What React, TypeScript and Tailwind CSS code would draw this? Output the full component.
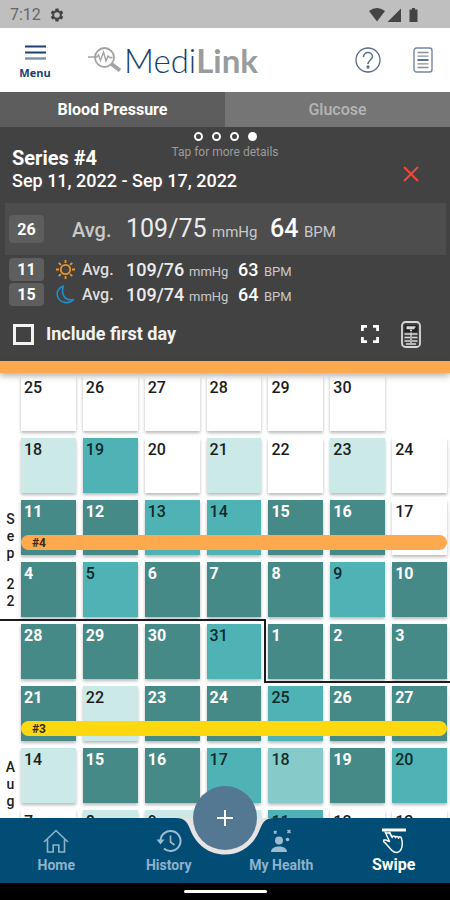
import type { ReactNode } from "react";

type Level = "none" | "pale" | "light" | "mid" | "dark" | "empty";
type Day = [string, Level];
type Week = { days: Day[]; bar?: { label: string; color: string }; monthBreak?: boolean };

const LEVELS: Record<Level, string> = {
  none: "bg-white font-medium text-[#1c1c1c] shadow-[0_2px_3px_rgba(0,0,0,0.28)]",
  pale: "bg-[#cbe9e7] font-medium text-[#1c1c1c] shadow-[0_2px_3px_rgba(0,0,0,0.28)]",
  light: "bg-[#86cac9] font-medium text-[#123033] shadow-[0_2px_3px_rgba(0,0,0,0.28)]",
  mid: "bg-[#4fb3b5] font-medium text-[#0d2a2c] shadow-[0_2px_3px_rgba(0,0,0,0.28)]",
  dark: "bg-[#468a87] font-bold text-white shadow-[0_2px_3px_rgba(0,0,0,0.28)]",
  empty: "",
};

const WEEKS: Week[] = [
  { days: [["25", "none"], ["26", "none"], ["27", "none"], ["28", "none"], ["29", "none"], ["30", "none"], ["", "empty"]] },
  { days: [["18", "pale"], ["19", "mid"], ["20", "none"], ["21", "pale"], ["22", "none"], ["23", "pale"], ["24", "none"]] },
  {
    days: [["11", "dark"], ["12", "dark"], ["13", "mid"], ["14", "mid"], ["15", "dark"], ["16", "dark"], ["17", "none"]],
    bar: { label: "#4", color: "bg-[#ffa94f]" },
  },
  { days: [["4", "dark"], ["5", "mid"], ["6", "dark"], ["7", "dark"], ["8", "dark"], ["9", "mid"], ["10", "dark"]] },
  {
    days: [["28", "dark"], ["29", "dark"], ["30", "dark"], ["31", "mid"], ["1", "dark"], ["2", "dark"], ["3", "dark"]],
    monthBreak: true,
  },
  {
    days: [["21", "dark"], ["22", "pale"], ["23", "dark"], ["24", "dark"], ["25", "mid"], ["26", "dark"], ["27", "dark"]],
    bar: { label: "#3", color: "bg-[#fdd80f]" },
  },
  { days: [["14", "pale"], ["15", "dark"], ["16", "dark"], ["17", "mid"], ["18", "light"], ["19", "dark"], ["20", "mid"]] },
  { days: [["7", "none"], ["8", "pale"], ["9", "pale"], ["10", "pale"], ["11", "mid"], ["12", "none"], ["13", "none"]] },
];

function StatusBar() {
  return (
    <div className="flex h-7 shrink-0 items-center justify-between bg-[#bfbfbf] pt-px pr-[31px] pl-[10px] text-[#4a4a4a]">
      <div className="flex items-center gap-2">
        <span className="text-base text-[#666]">7:12</span>
        <svg viewBox="0 0 24 24" className="size-4" fill="#444">
          <path d="M19.14 12.94c.04-.3.06-.61.06-.94 0-.32-.02-.64-.07-.94l2.03-1.58a.49.49 0 0 0 .12-.61l-1.92-3.32a.49.49 0 0 0-.59-.22l-2.39.96a7 7 0 0 0-1.62-.94l-.36-2.54a.48.48 0 0 0-.48-.41h-3.84a.48.48 0 0 0-.47.41l-.36 2.54c-.59.24-1.13.57-1.62.94l-2.39-.96a.49.49 0 0 0-.59.22L2.74 8.87a.48.48 0 0 0 .12.61l2.03 1.58c-.05.3-.09.63-.09.94s.02.64.07.94l-2.03 1.58a.49.49 0 0 0-.12.61l1.92 3.32c.12.22.37.29.59.22l2.39-.96c.5.38 1.03.7 1.62.94l.36 2.54c.05.24.24.41.48.41h3.84c.24 0 .44-.17.47-.41l.36-2.54a6.8 6.8 0 0 0 1.62-.94l2.39.96c.22.08.47 0 .59-.22l1.92-3.32a.48.48 0 0 0-.12-.61zM12 16.2a4.2 4.2 0 1 1 0-8.4 4.2 4.2 0 0 1 0 8.4z" />
        </svg>
      </div>
      <svg width="50" height="16" viewBox="0 0 50 16" fill="#444">
        <path d="M0 4Q8-2 16 4L8 14.500Z" />
        <path d="M18.500 15H32V1.500Z" />
        <path d="M43 1h3v1.500h2.500V15h-8V2.500H43z" />
      </svg>
    </div>
  );
}

function Header() {
  return (
    <header className="flex h-16 shrink-0 items-center bg-white pr-[17px] pl-[14px]">
      <button className="flex w-[42px] flex-col items-center gap-[6px] pt-1 text-[#173f70]">
        <svg width="21" height="15" viewBox="0 0 21 15">
          <path d="M0 1.500h21M0 7.500h21" stroke="#1c3f74" strokeWidth="2.200" />
          <path d="M0 13.500h21" stroke="#7d92a6" strokeWidth="2.400" />
        </svg>
        <span className="text-[11px] leading-[14px] font-bold font-['Open_Sans',sans-serif]">Menu</span>
      </button>
      <div className="ml-8 flex items-center gap-[2px]">
        <svg width="34" height="28" viewBox="0 0 34 28" fill="none" stroke="#a3a3a3">
          <circle cx="16.500" cy="11.500" r="9.500" strokeWidth="1.800" />
          <path d="M0 11h9l1.500-2 2 5.500L15.500 6l2.500 9 2-5 1.500 1.500h3" strokeWidth="1.400" />
          <path d="M23.500 18l8.500 6.500" strokeWidth="4" />
        </svg>
        <span className="text-[33px] leading-[40px] font-light text-[#173f70] font-['Lato',sans-serif]">
          Medi<span className="font-bold text-[#999c9e]">Link</span>
        </span>
      </div>
      <div className="ml-auto flex items-center gap-8">
        <button aria-label="Help">
          <svg width="26" height="26" viewBox="0 0 26 26" fill="none" stroke="#5b7088" strokeWidth="1.300">
            <circle cx="13" cy="13" r="12" />
            <path d="M8.500 10c0-2.800 2-4.400 4.500-4.400s4.500 1.600 4.500 4c0 3.400-4.500 3.400-4.500 7.400" strokeWidth="1.500" />
            <circle cx="13" cy="20" r="1" fill="#2c4666" />
          </svg>
        </button>
        <button aria-label="Log book">
          <svg width="20" height="26" viewBox="0 0 20 26" fill="none">
            <rect x="1" y="1" width="18" height="24" rx="2.500" stroke="#7487a0" strokeWidth="1.400" />
            <path d="M4.500 5.500h11M4.500 9.200h11M4.500 16.800h11M4.500 20.500h11" stroke="#8a9099" strokeWidth="1.300" />
            <path d="M4.500 13h11" stroke="#24457a" strokeWidth="1.500" />
          </svg>
        </button>
      </div>
    </header>
  );
}

function Tabs() {
  return (
    <div role="tablist" className="grid h-[35px] shrink-0 grid-cols-2 text-base">
      <button role="tab" aria-selected="true" className="bg-[#5d5d5d] font-bold text-white">
        Blood Pressure
      </button>
      <button role="tab" aria-selected="false" className="bg-[#757575] font-medium text-[#b5b5b5]">
        Glucose
      </button>
    </div>
  );
}

function Count({ children, tall }: { children: ReactNode; tall?: boolean }) {
  return (
    <span
      className={`flex w-[35px] items-center justify-center rounded-[4px] bg-[#5e5e5e] pt-px text-base font-bold text-white ${
        tall ? "h-7" : "h-[23px]"
      }`}
    >
      {children}
    </span>
  );
}

function Reading({ count, icon, bp, bpm }: { count: string; icon: ReactNode; bp: string; bpm: string }) {
  return (
    <div className="flex h-[25px] items-center pl-[9px]">
      <Count>{count}</Count>
      <span className="ml-3 w-[19px]">{icon}</span>
      <span className="ml-[7px] w-[44px] text-base font-medium text-[#dedede]">Avg.</span>
      <div className="flex items-baseline text-[#c9c9c9]">
        <span className="w-[63px] text-lg font-medium text-[#ececec]">{bp}</span>
        <span className="w-[49px] text-[13px]">mmHg</span>
        <span className="w-[26px] text-lg font-medium text-white">{bpm}</span>
        <span className="text-[13px]">BPM</span>
      </div>
    </div>
  );
}

function Summary() {
  return (
    <section className="shrink-0 bg-[#424242] text-white">
      <div className="relative h-[76px] px-3 pt-5">
        <button className="absolute inset-x-0 top-[5px] flex flex-col items-center text-[#9b9b9b]">
          <span className="flex gap-[9px]">
            <span className="size-[9px] rounded-full border-2 border-white" />
            <span className="size-[9px] rounded-full border-2 border-white" />
            <span className="size-[9px] rounded-full border-2 border-white" />
            <span className="size-[9px] rounded-full bg-white" />
          </span>
          <span className="mt-1 text-xs leading-[14px]">Tap for more details</span>
        </button>
        <div className="flex items-center justify-between pr-[19px]">
          <h1>
            <span className="block text-xl leading-[23px] font-bold">Series #4</span>
            <span className="block text-lg leading-[22px] font-medium">Sep 11, 2022 - Sep 17, 2022</span>
          </h1>
          <button aria-label="Close" className="relative mt-2">
            <svg width="16" height="16" viewBox="0 0 16 16" stroke="#f4473a" strokeWidth="2">
              <path d="M1 1l14 14M15 1L1 15" />
            </svg>
          </button>
        </div>
      </div>
      <div className="mr-1 ml-[5px] flex h-[52px] items-center bg-[#4d4d4d] pl-1">
        <Count tall>26</Count>
        <div className="ml-7 flex items-baseline text-[#c9c9c9]">
          <span className="w-[54px] text-xl font-medium">Avg.</span>
          <span className="w-[86px] text-[25px] text-[#ececec]">109/75</span>
          <span className="w-[58px] text-[15px]">mmHg</span>
          <span className="w-[34px] text-[25px] font-medium text-white">64</span>
          <span className="text-[15px]">BPM</span>
        </div>
      </div>
      <div className="pt-[2px]">
        <Reading
          count="11"
          bp="109/76"
          bpm="63"
          icon={
            <svg width="19" height="19" viewBox="0 0 19 19" fill="none" stroke="#ec962f" strokeWidth="1.800">
              <circle cx="9.500" cy="9.500" r="4.700" />
              <path d="M9.500 0v3M9.500 16v3M0 9.500h3M16 9.500h3M2.800 2.800l2.100 2.100M14.100 14.100l2.100 2.100M2.800 16.200l2.100-2.100M14.100 4.900l2.100-2.100" />
            </svg>
          }
        />
        <Reading
          count="15"
          bp="109/74"
          bpm="64"
          icon={
            <svg width="19" height="19" viewBox="0 0 19 19" fill="none" stroke="#1f8fcb" strokeWidth="1.600" strokeLinejoin="round">
              <path d="M7.500 1C2.500 2.500 0 7.500 1.800 12c2 5.500 11 8 15.700 2.500-4 .8-8-.4-9.700-3.700C6 7.500 6.200 4 7.500 1z" />
            </svg>
          }
        />
      </div>
      <div className="flex h-[54px] items-center pr-[29px] pl-[13px]">
        <input
          id="first-day"
          type="checkbox"
          className="size-[21px] appearance-none border-[3px] border-[#f2f2f2] checked:bg-white"
        />
        <label htmlFor="first-day" className="ml-3 text-lg font-bold text-[#f2f2f2]">
          Include first day
        </label>
        <button aria-label="Full screen" className="ml-auto">
          <svg width="18" height="18" viewBox="0 0 18 18" fill="none" stroke="#fff" strokeWidth="2.800">
            <path d="M1.400 6V1.400H6M12 1.400h4.600V6M16.600 12v4.600H12M6 16.600H1.400V12" />
          </svg>
        </button>
        <button aria-label="Report" className="ml-[22px]">
          <svg width="20" height="27" viewBox="0 0 20 27" fill="none" stroke="#d8d8d8">
            <rect x="1" y="1" width="18" height="25" rx="3.500" strokeWidth="1.800" />
            <path d="M3.500 4h13v7h-13z" fill="#222" stroke="none" />
            <path d="M5.500 6h9M5.500 7.500h8M9 9.500h2" strokeWidth="1.500" />
            <path d="M3.500 13h13M3.500 16.500h5.500M11 16.500h5.500M3.500 20h5.500M11 20h5.500M5 23h10M10 11.500V22" strokeWidth="1.400" />
          </svg>
        </button>
      </div>
    </section>
  );
}

function MonthLabel({ text }: { text: string }) {
  return (
    <div className="flex w-[21px] flex-col items-center text-sm leading-[17px] font-medium text-[#1c1c1c]">
      {text.split("").map((c, i) => (
        <span key={i} className={c === " " ? "h-[14px]" : "h-[17px]"}>
          {c}
        </span>
      ))}
    </div>
  );
}

function Calendar() {
  return (
    <main className="flex min-h-0 flex-1 overflow-hidden bg-white">
      <div className="flex w-[21px] shrink-0 flex-col gap-[149px] pt-[138px]">
        <MonthLabel text="Sep 22" />
        <MonthLabel text="Aug" />
      </div>
      <div className="flex flex-1 flex-col gap-[7px] pt-[3px] pr-[3px]">
        {WEEKS.map((week, w) => (
          <div key={w} className="relative grid h-[55px] shrink-0 grid-cols-7 gap-x-[7px]">
            {week.days.map(([n, level], d) => (
              <div key={d} className={`px-[3px] pt-[2px] text-base leading-5 ${LEVELS[level]}`}>
                {n}
              </div>
            ))}
            {week.bar && (
              <div
                className={`absolute inset-x-0 top-[35px] flex h-[15px] items-center rounded-full pl-[11px] text-xs font-bold text-[#3a2a10] ${week.bar.color}`}
              >
                {week.bar.label}
              </div>
            )}
            {week.monthBreak && (
              <div className="absolute inset-x-0 -top-[5px] -bottom-1 grid grid-cols-7 gap-x-[7px]">
                <div className="col-span-4 -mr-[5px] -ml-[21px] border-t-2 border-r-2 border-[#1d1a20]" />
                <div className="col-span-3 -mr-[3px] -ml-[4px] border-b-2 border-[#1d1a20]" />
              </div>
            )}
          </div>
        ))}
      </div>
    </main>
  );
}

function NavItem({ label, active, children }: { label: string; active?: boolean; children: ReactNode }) {
  return (
    <a
      href="#"
      className={`flex flex-1 flex-col items-center pt-[10px] ${
        active ? "text-base font-bold text-white" : "text-sm font-bold text-[#8fb1c9]"
      }`}
    >
      <span className="flex h-[26px] items-center">{children}</span>
      <span className="leading-[22px]">{label}</span>
    </a>
  );
}

function BottomNav() {
  return (
    <nav className="relative flex h-[65px] shrink-0 bg-[#024d76]">
      <NavItem label="Home">
        <svg width="26" height="24" viewBox="0 0 26 24" fill="none" stroke="#8fb1c9" strokeWidth="1.600">
          <path d="M1 13L13 1.500 25 13M4.500 10.500V23h5.700v-7h5.600v7h5.700V10.500" />
        </svg>
      </NavItem>
      <NavItem label="History">
        <svg width="26" height="24" viewBox="0 0 26 24" fill="none" stroke="#9dbcd0" strokeWidth="2">
          <path d="M4.500 12a10 10 0 1 1 3.400 7.500" />
          <path d="M.5 10.500h8l-4 5z" fill="#9dbcd0" stroke="none" />
          <path d="M14.500 6.500V13l4 3" strokeWidth="1.600" />
        </svg>
      </NavItem>
      <NavItem label="My Health">
        <svg width="26" height="24" viewBox="0 0 26 24" fill="#9dbcd0">
          <circle cx="11" cy="11.500" r="4" />
          <path d="M3 23c0-4 4-5.500 8-5.500s8 1.500 8 5.500z" />
          <path d="M6 2l2.500 2.500M8.500 2L6 4.500M19.500 1l3 3M22.500 1l-3 3" stroke="#9dbcd0" strokeWidth="1.500" />
          <circle cx="19.500" cy="10.500" r="1.800" />
        </svg>
      </NavItem>
      <NavItem label="Swipe" active>
        <svg width="26" height="26" viewBox="0 0 26 26" fill="none" stroke="#fff" strokeWidth="1.500" strokeLinejoin="round">
          <path d="M1 2h24" strokeWidth="3" />
          <path d="M4 3.500l4.500 10-4-1.500c-2.500-.5-2.500 1.500-.5 2.800l7 7.700c3 3 7.500 2.500 9-1 2-4 1.500-7.500.5-11-.8-2.500-2.800-2-3-.2-.2-2.300-2.800-2.500-3.100-.6-.4-2.200-2.900-2.200-3.100-.2L8 4" />
          <path d="M5 5h4l2 4" />
        </svg>
      </NavItem>
      <div className="absolute -top-8 left-1/2 -translate-x-1/2">
        <svg width="108" height="70" viewBox="0 0 108 70" className="block">
          <path d="M5 32C14 32 16 36 19 43C25 59 38 68.500 54 68.500S83 59 89 43C92 36 94 32 103 32Z" fill="#e6e4e3" />
        </svg>
        <button
          aria-label="Add reading"
          className="absolute top-0 left-[22px] flex size-16 items-center justify-center rounded-full bg-[#557892]"
        >
          <svg width="16" height="16" viewBox="0 0 16 16" stroke="#fff" strokeWidth="2">
            <path d="M8 0v16M0 8h16" />
          </svg>
        </button>
      </div>
    </nav>
  );
}

export default function App() {
  return (
    <div className="flex h-screen flex-col overflow-hidden bg-white font-['Roboto',sans-serif]">
      <StatusBar />
      <Header />
      <Tabs />
      <Summary />
      <div className="relative z-10 h-3 shrink-0 bg-[#ffa94f] shadow-[0_3px_6px_rgba(0,0,0,0.3)]" />
      <Calendar />
      <BottomNav />
      <div className="flex h-[17px] shrink-0 items-center justify-center bg-black">
        <div className="h-[3px] w-[83px] rounded-full bg-white" />
      </div>
    </div>
  );
}
